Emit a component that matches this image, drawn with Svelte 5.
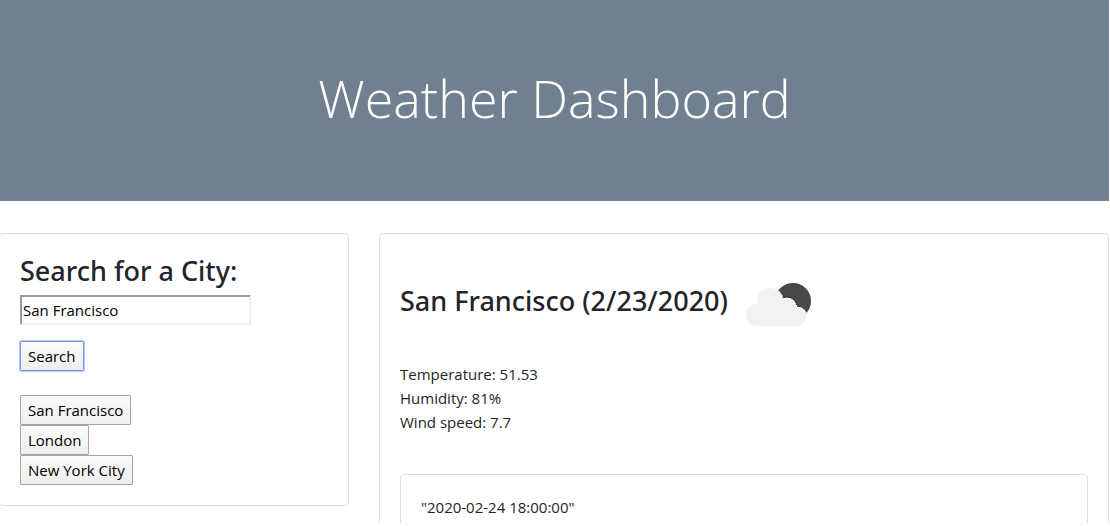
<script>
  let city = $state('San Francisco');
  const history = ['San Francisco', 'London', 'New York City'];
  const readings = ['Temperature: 51.53', 'Humidity: 81%', 'Wind speed: 7.7'];
</script>

<div class="page">
  <header><h1>Weather Dashboard</h1></header>
  <main>
    <aside class="card search">
      <form onsubmit={(e) => e.preventDefault()}>
        <h2><label for="city">Search for a City:</label></h2>
        <input id="city" type="text" bind:value={city} />
        <button class="submit" type="submit">Search</button>
      </form>
      <div class="history">
        {#each history as name}
          <button type="button" onclick={() => (city = name)}>{name}</button>
        {/each}
      </div>
    </aside>
    <section class="card current">
      <div class="title">
        <h2>San Francisco (2/23/2020)</h2>
        <svg width="100" height="100" viewBox="0 0 100 100" role="img" aria-label="Broken clouds">
          <circle cx="65" cy="50" r="18" fill="#48484a" />
          <g fill="#fff" stroke="#2b2b2d" stroke-width="1" clip-path="url(#sun)">
            <circle cx="42" cy="50" r="14" />
            <circle cx="59" cy="56" r="10" />
            <circle cx="69" cy="66" r="11" />
          </g>
          <clipPath id="sun"><circle cx="65" cy="50" r="18" /></clipPath>
          <g fill="#f2f2f2">
            <circle cx="29" cy="64" r="11" />
            <circle cx="42" cy="50" r="13" />
            <circle cx="59" cy="57" r="9" />
            <circle cx="69" cy="66" r="9" />
            <rect x="29" y="54" width="40" height="21" />
          </g>
        </svg>
      </div>
      <div class="readings">
        {#each readings as line}<p>{line}</p>{/each}
      </div>
      <article class="card forecast">"2020-02-24 18:00:00"</article>
    </section>
  </main>
</div>

<style>
  :global(body) { margin: 0; background: #fff; }
  .page {
    box-sizing: border-box;
    height: calc(100vh - 3px);
    padding-right: 1px;
    overflow: hidden;
    color: #212529;
    font: 15px/24px "Open Sans", "Noto Sans", sans-serif;
  }
  h1, h2, p { margin: 0; }
  header { padding: 64px 32px 70px; background: #708090; text-align: center; }
  h1 { color: #fff; font-size: 52px; line-height: 67px; font-weight: 300; }
  h2 { font-family: "Noto Sans", sans-serif; font-size: 27px; line-height: 34px; font-weight: 500; }
  main {
    display: grid;
    grid-template-columns: minmax(0, 350fr) minmax(0, 730fr);
    align-items: start;
    gap: 30px;
    margin: 32px 0 0 -1px;
  }
  .card { box-sizing: border-box; padding: 20px; border: 1px solid #dfdfdf; border-radius: 4px; }
  form { display: flex; flex-direction: column; align-items: flex-start; }
  input {
    box-sizing: border-box;
    width: 231px;
    max-width: 100%;
    height: 30px;
    margin: 7px 0 16px;
    padding: 1px;
    border: 2px solid;
    border-color: #9a9a9a #eee #eee #9a9a9a;
    background: #fff;
    color: #000;
    font: inherit;
  }
  button {
    height: 30px;
    padding: 0 7px;
    border: 1px solid #a6a6a6;
    border-radius: 1px;
    background: linear-gradient(#fbfbfb, #eee);
    color: #000;
    font: inherit;
  }
  .submit { border-color: #6f98dc; box-shadow: 0 0 0 1px #b4cbf2; }
  .history { display: flex; flex-direction: column; align-items: flex-start; margin-top: 24px; }
  .title { display: flex; align-items: center; height: 94px; }
  svg { flex: none; }
  .readings { margin: 14px 0 40px; }
</style>
